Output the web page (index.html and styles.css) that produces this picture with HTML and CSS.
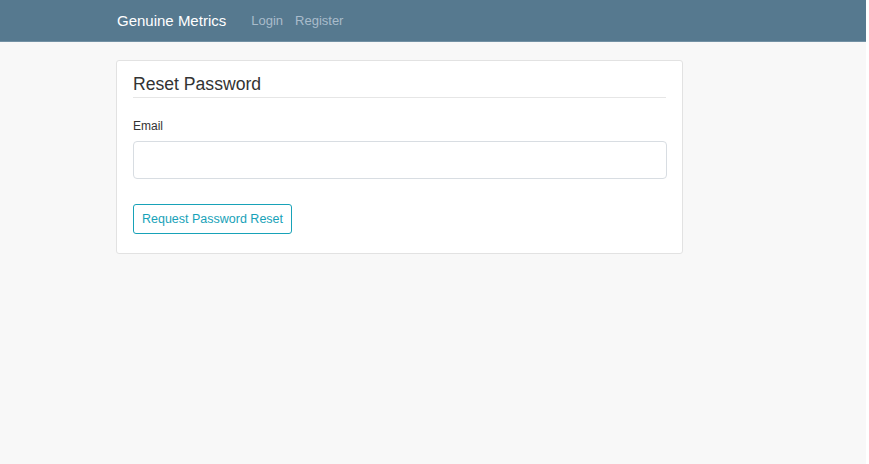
FILE: index.html
```html
<!DOCTYPE html>
<html>
<head>
<meta charset="utf-8">
<link rel="stylesheet" href="styles.css">
</head>
<body>
<div class="page">
  <nav class="navbar">
    <a class="brand">Genuine Metrics</a>
    <a class="nav-link">Login</a>
    <a class="nav-link">Register</a>
  </nav>
  <main class="content">
    <section class="card">
      <h1 class="card-title">Reset Password</h1>
      <form class="form">
        <label class="label">Email</label>
        <input class="input" type="email">
        <button class="btn" type="button">Request Password Reset</button>
      </form>
    </section>
  </main>
</div>
</body>
</html>
```

FILE: styles.css
```css
html, body {
  margin: 0;
  padding: 0;
  background: #ffffff;
  font-family: "Liberation Sans", Arial, sans-serif;
}
.page {
  width: 866px;
  height: 464px;
  background: #f8f8f8;
}
.navbar {
  height: 42px;
  background: #56798f;
  border-bottom: 1px solid #7391a4;
  display: flex;
  align-items: center;
  padding-left: 117px;
  padding-bottom: 1px;
  box-sizing: border-box;
}
.brand {
  color: #ffffff;
  font-size: 15px;
  margin-right: 25px;
}
.nav-link {
  color: #a9bccb;
  font-size: 13px;
  margin-right: 12px;
}
.content {
  padding: 18px 0 0 116px;
}
.card {
  width: 567px;
  height: 194px;
  box-sizing: border-box;
  background: #ffffff;
  border: 1px solid #e2e2e2;
  border-radius: 3px;
  padding: 12px 16px 0 16px;
}
.card-title {
  margin: 0;
  font-size: 17.6px;
  font-weight: normal;
  color: #333;
  line-height: 23px;
  padding-bottom: 1px;
  border-bottom: 1px solid #e6e6e6;
}
.form {
  display: flex;
  flex-direction: column;
  align-items: flex-start;
}
.label {
  font-size: 12px;
  color: #333;
  margin-top: 20px;
  line-height: 16px;
}
.input {
  margin-top: 7px;
  width: 534px;
  height: 38px;
  box-sizing: border-box;
  border: 1px solid #d8dde2;
  border-radius: 4px;
  background: #fff;
}
.btn {
  margin-top: 25px;
  height: 30px;
  width: 159px;
  box-sizing: border-box;
  border: 1px solid #17a2b8;
  border-radius: 3px;
  background: #fff;
  color: #17a2b8;
  font-family: "Liberation Sans", Arial, sans-serif;
  font-size: 12.5px;
  padding: 0;
}
```
